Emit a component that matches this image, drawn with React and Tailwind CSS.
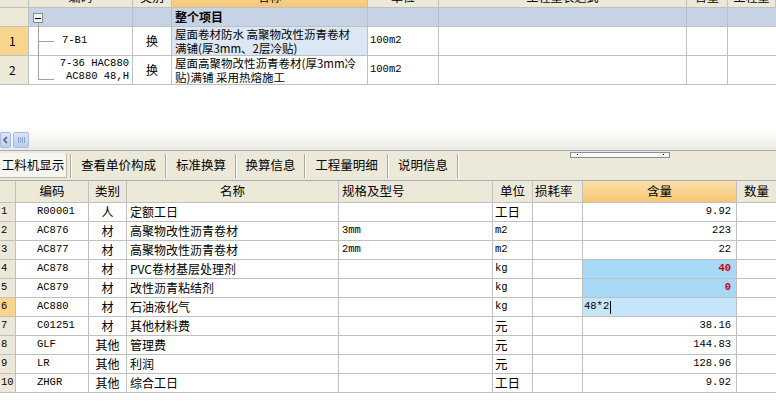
const topW = ["w-[29px]", "w-[104px]", "w-[39px]", "w-[196px]", "w-[71px]", "w-[248px]", "w-[41px]", "w-[48px]"];
const botW = ["w-[16px]", "w-[73px]", "w-[38px]", "w-[212px]", "w-[154px]", "w-[40px]", "w-[50px]", "w-[154px]", "w-[39px]"];

const rows = [
  ["1", "R00001", "人", "定额工日", "", "工日", "", "9.92"],
  ["2", "AC876", "材", "高聚物改性沥青卷材", "3mm", "m2", "", "223"],
  ["3", "AC877", "材", "高聚物改性沥青卷材", "2mm", "m2", "", "22"],
  ["4", "AC878", "材", "PVC卷材基层处理剂", "", "kg", "", "40"],
  ["5", "AC879", "材", "改性沥青粘结剂", "", "kg", "", "0"],
  ["6", "AC880", "材", "石油液化气", "", "kg", "", "48*2"],
  ["7", "C01251", "材", "其他材料费", "", "元", "", "38.16"],
  ["8", "GLF", "其他", "管理费", "", "元", "", "144.83"],
  ["9", "LR", "其他", "利润", "", "元", "", "128.96"],
  ["10", "ZHGR", "其他", "综合工日", "", "工日", "", "9.92"],
];

const tabs = [
  ["工料机显示", "w-[72px]"],
  ["查看单价构成", "w-[95px]"],
  ["标准换算", "w-[70px]"],
  ["换算信息", "w-[69px]"],
  ["工程量明细", "w-[83px]"],
  ["说明信息", "w-[70px]"],
];

const mono = "font-['Liberation_Mono','Noto_Sans_CJK_SC',monospace] text-[10.5px]";
const line = "border-r border-[#c0c0c0]";
const band = "bg-[#c5d3e4] border-r border-[#b4c0d0]";

function TopHeader() {
  const labels = ["", "编码", "类别", "名称", "单位", "工程量表达式", "含量", "工程量"];
  return (
    <div className="h-[8px] overflow-hidden">
      <div className="flex h-[22px] -mt-[14px] bg-[#ece9d8] border-b border-[#c0c0c0]">
        {labels.map((l, i) => (
          <div
            key={i}
            className={`${topW[i]} shrink-0 flex items-center justify-center ${line} ${
              i === 3 ? "bg-gradient-to-b from-[#fbe0a8] to-[#f4c775]" : ""
            }`}
          >
            {l}
          </div>
        ))}
      </div>
    </div>
  );
}

function TopTable() {
  return (
    <div>
      <TopHeader />
      {/* 整个项目 */}
      <div className="flex h-[19px] border-b border-[#c0c0c0]">
        <div className={`w-[29px] shrink-0 bg-[#ece9d8] ${line}`} />
        <div className={`w-[104px] shrink-0 relative ${band}`}>
          <div className="absolute left-[4px] top-[5px] w-[10px] h-[10px] border border-[#8a8a8a] bg-[#f2f2f2] flex items-center justify-center">
            <div className="w-[6px] h-[1px] bg-black" />
          </div>
          <div className="absolute left-[9px] top-[15px] w-[1px] h-[4px] bg-[#a0a0a0]" />
        </div>
        <div className={`w-[39px] shrink-0 ${band}`} />
        <div className={`w-[196px] shrink-0 ${band} font-bold pl-[3px] flex items-center`}>整个项目</div>
        <div className={`w-[71px] shrink-0 ${band}`} />
        <div className={`w-[248px] shrink-0 ${band}`} />
        <div className={`w-[41px] shrink-0 ${band}`} />
        <div className="w-[48px] shrink-0 bg-[#c5d3e4]" />
      </div>
      {/* row 1 */}
      <div className="flex h-[29px] border-b border-[#c0c0c0]">
        <div className={`w-[29px] shrink-0 bg-[#f9d48d] ${line} flex items-center pl-[9px]`}>1</div>
        <div className={`w-[104px] shrink-0 relative ${line} flex items-center pl-[33px]`}>
          <div className="absolute left-[9px] top-0 w-[1px] h-[29px] bg-[#a0a0a0]" />
          <div className="absolute left-[9px] top-[14px] w-[16px] h-[1px] bg-[#a0a0a0]" />
          <span className={mono}>7-B1</span>
        </div>
        <div className={`w-[39px] shrink-0 ${line} flex items-center justify-center`}>换</div>
        <div className={`w-[196px] shrink-0 bg-[#dce7f5] ${line} pl-[3px] flex flex-col justify-center text-[11.5px] leading-[14px] whitespace-nowrap overflow-hidden`}>
          <div>屋面卷材防水 高聚物改性沥青卷材</div>
          <div>满铺(厚3mm、2层冷贴)</div>
        </div>
        <div className={`w-[71px] shrink-0 ${line} flex items-center pl-[2px] ${mono}`}>100m2</div>
        <div className={`w-[248px] shrink-0 ${line}`} />
        <div className={`w-[41px] shrink-0 ${line}`} />
        <div className="w-[48px] shrink-0" />
      </div>
      {/* row 2 */}
      <div className="flex h-[29px] border-b border-[#c0c0c0]">
        <div className={`w-[29px] shrink-0 bg-[#ece9d8] ${line} flex items-center pl-[9px]`}>2</div>
        <div className={`w-[104px] shrink-0 relative ${line} pr-[3px] flex flex-col justify-center text-right leading-[13px]`}>
          <div className="absolute left-[9px] top-0 w-[1px] h-[23px] bg-[#a0a0a0]" />
          <div className="absolute left-[9px] top-[23px] w-[16px] h-[1px] bg-[#a0a0a0]" />
          <div className={mono}>7-36 HAC880</div>
          <div className={mono}>AC880 48,H</div>
        </div>
        <div className={`w-[39px] shrink-0 ${line} flex items-center justify-center`}>换</div>
        <div className={`w-[196px] shrink-0 ${line} pl-[3px] flex flex-col justify-center text-[11.5px] leading-[14px] whitespace-nowrap overflow-hidden`}>
          <div>屋面高聚物改性沥青卷材(厚3mm冷</div>
          <div>贴)满铺 采用热熔施工</div>
        </div>
        <div className={`w-[71px] shrink-0 ${line} flex items-center pl-[2px] ${mono}`}>100m2</div>
        <div className={`w-[248px] shrink-0 ${line}`} />
        <div className={`w-[41px] shrink-0 ${line}`} />
        <div className="w-[48px] shrink-0" />
      </div>
    </div>
  );
}

function ScrollStrip() {
  return (
    <div className="h-[20px] bg-gradient-to-b from-white to-[#ebeae3] flex items-start pt-[2px] gap-[2px]">
      <div className="w-[11px] h-[16px] rounded-[2px] border border-[#a9bbdc] bg-gradient-to-b from-[#dbe5f8] to-[#bccdee] flex items-center justify-center">
        <svg width="7" height="8" viewBox="0 0 7 8">
          <path d="M5 1 L2 4 L5 7" stroke="#4d6185" strokeWidth="1.6" fill="none" />
        </svg>
      </div>
      <div className="w-[16px] h-[16px] rounded-[2px] border border-[#a9bbdc] bg-gradient-to-b from-[#dbe5f8] to-[#bccdee] flex items-center justify-center gap-[1px]">
        <div className="w-[1px] h-[6px] bg-[#8ea3cc]" />
        <div className="w-[1px] h-[6px] bg-[#8ea3cc]" />
        <div className="w-[1px] h-[6px] bg-[#8ea3cc]" />
        <div className="w-[1px] h-[6px] bg-[#8ea3cc]" />
      </div>
    </div>
  );
}

function TabBar() {
  return (
    <div className="relative h-[31px] bg-[#ece9d8] border-t border-b border-[#a3afbf] flex items-center">
      {tabs.map(([t, w], i) => (
        <div key={t} className={`${w} shrink-0 h-[25px] flex items-center`}>
          <div
            className={`flex-1 h-full flex items-center justify-center text-[12.5px] ${
              i === 0 ? "bg-[#f6f5ef] border-r border-b border-[#bdb9a6] mr-[3px]" : ""
            }`}
          >
            {t}
          </div>
          <div className="w-[1px] h-[24px] bg-[#aca899]" />
          <div className="w-[1px] h-[24px] bg-white" />
        </div>
      ))}
      {/* splitter grip */}
      <div className="absolute left-[570px] top-[1px] w-[100px] h-[6px] border border-[#8d8d8d] bg-[#f8f8f4]">
        <div className="absolute left-[6px] top-[1px] w-[1px] h-[1px] bg-black" />
        <div className="absolute left-[92px] top-[1px] w-[1px] h-[1px] bg-black" />
      </div>
    </div>
  );
}

function BottomTable() {
  const labels = ["", "编码", "类别", "名称", "规格及型号", "单位", "损耗率", "含量", "数量"];
  return (
    <div>
      <div className="flex h-[22px] bg-[#ece9d8] border-b border-[#c0c0c0] text-[12.5px]">
        {labels.map((l, i) => (
          <div
            key={i}
            className={`${botW[i]} shrink-0 flex items-center ${i === 8 ? "justify-center" : line} ${
              i === 4 ? "pl-[3px]" : i === 6 ? "pl-[2px]" : "justify-center"
            } ${i === 7 ? "bg-gradient-to-b from-[#fbe0a8] to-[#f4c775]" : ""}`}
          >
            {l}
          </div>
        ))}
      </div>
      {rows.map((r) => {
        const n = Number(r[0]);
        const red = n === 4 || n === 5;
        const edit = n === 6;
        const cnUnit = r[5] === "工日" || r[5] === "元";
        return (
          <div key={r[0]} className="flex h-[19px] border-b border-[#c0c0c0]">
            <div className={`w-[16px] shrink-0 ${line} flex items-center pl-[1px] ${mono} ${edit ? "bg-[#f9d48d]" : "bg-[#ece9d8]"}`}>
              {r[0]}
            </div>
            <div className={`w-[73px] shrink-0 ${line} flex items-center pl-[21px] ${mono}`}>{r[1]}</div>
            <div className={`w-[38px] shrink-0 ${line} flex items-center justify-center`}>{r[2]}</div>
            <div className={`w-[212px] shrink-0 ${line} flex items-center pl-[3px]`}>{r[3]}</div>
            <div className={`w-[154px] shrink-0 ${line} flex items-center pl-[3px] ${mono}`}>{r[4]}</div>
            <div className={`w-[40px] shrink-0 ${line} flex items-center pl-[2px] ${cnUnit ? "text-[12.5px]" : mono}`}>{r[5]}</div>
            <div className={`w-[50px] shrink-0 ${line}`} />
            <div
              className={`w-[154px] shrink-0 ${line} flex items-center ${mono} ${
                edit ? "bg-[#c4e5fa] pl-[1px]" : "justify-end pr-[5px]"
              } ${red ? "bg-[#a7d8f6] text-[#cc0000] font-bold" : ""}`}
            >
              {r[7]}
              {edit && <span className="w-[1px] h-[13px] bg-black ml-[1px]" />}
            </div>
            <div className="w-[39px] shrink-0" />
          </div>
        );
      })}
    </div>
  );
}

export default function App() {
  return (
    <div className="w-[776px] h-[418px] overflow-hidden bg-white text-black text-[12px] font-['Noto_Sans_CJK_SC',sans-serif]">
      <TopTable />
      <div className="h-[45px]" />
      <ScrollStrip />
      <TabBar />
      <BottomTable />
    </div>
  );
}
